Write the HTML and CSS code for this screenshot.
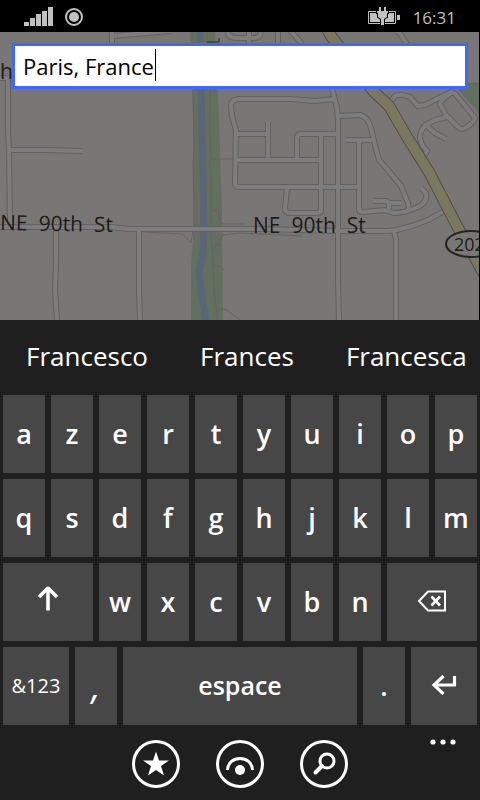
FILE: index.html
```
<!DOCTYPE html>
<html lang="fr">
<head>
<meta charset="utf-8">
<meta name="viewport" content="width=device-width, initial-scale=1">
<title>Cartes</title>
<link rel="stylesheet" href="styles.css">
</head>
<body>
<header class="status">
  <svg class="signal" width="30" height="20" viewBox="0 0 30 20" aria-hidden="true"><path d="M0 15h5v4H0zM6 11h5v8H6zM12 7h5v12h-5zM18 4h5v15h-5zM24 0h5v19h-5z"/></svg>
  <svg class="record" width="18" height="20" viewBox="0 0 18 20" aria-hidden="true"><circle cx="9" cy="10" r="8" fill="none" stroke="#c1c1c1" stroke-width="2"/><circle cx="9" cy="10" r="5"/></svg>
  <svg class="battery" width="32" height="18" viewBox="0 0 32 18" aria-hidden="true">
    <path d="M.5 4.500H27.500V16.500H.5Z" fill="none" stroke="#c1c1c1"/>
    <path d="M2 6H26V15H2ZM29 8h3v5h-3z"/>
    <path class="plug" d="M11 0h2v4h3V0h2v4h2v2h-1v4l-3 2v6h-3v-6l-3-2V6H9V4h2z"/>
  </svg>
  <time class="clock">16:31</time>
</header>

<main class="map">
  <svg class="map-art" viewBox="0 32 480 288" preserveAspectRatio="xMidYMid slice" role="img" aria-label="Plan">
    <defs>
      <g id="roads">
        <path d="M0 78H7M8 78V130L9 150L10 224M10 150L45 150L82 151"/>
        <path d="M112 32V60M112 36L171 31"/>
        <path d="M56 228L56 262L55 290L57 320M139 230V290L140 320"/>
        <path d="M227 30Q228 38 236 38H254Q261 38 261 30M249 30V43M278 30V43M290 30L302 44"/>
        <path d="M396 31Q401 33 402 37L408 45"/>
        <path d="M334 99L315 101L290 99H238Q231 100 231 106L232 116L236 130L235 183Q235 187 239 187H357"/>
        <path d="M326 70L333 92L337 108L338 120V280L339 320M236 134H267M268 122V159M236 160H321M297 160V138Q297 134 301 134H338M321 134V210Q321 213 317 213H290Q285 213 285 208L287 189"/>
        <path d="M346 140L374 140M359 141V209Q359 212 363 212L385 210L394 213Q405 213 418 207Q428 202 426 193L421 188"/>
        <path d="M339 116L360 115Q368 117 371 128L375 145L379 160L388 170L401 186L408 203L409 210M374 201H386L389 203V209M389 203H401"/>
        <path d="M391 101L395 96Q402 93 410 97L418 106L425 105L453 91M451 93Q454 92 457 96L475 118Q475 122 465 128Q461 130 458 127L446 115L440 104Q440 101 451 93M447 117L435 120L427 124Q420 129 420 138L422 145L427 151L425 155M427 126L435 133L446 139"/>
        <path d="M394 231L396 240V320"/>
      </g>
      <path id="avenue" d="M-2 227L110 227L130 229L230 229L260 229L340 231H388L397 230L415 225L430 219L446 210"/>
      <path id="highway" d="M322 20L331 36L373 91L389 106L407 137L429 172L457 226L484 274"/>
    </defs>
    <rect y="32" width="480" height="288" fill="#797775"/>
    <path d="M190 32H215L219 120L222 210L223 320H191V262L193 240V120Z" fill="#64705f"/>
    <path d="M457 87L465 83L480 82V114L460 92Z" fill="#64705f"/>
    <path d="M200 30L201 90L203 180L204 230L203 252L199 272L201 290L206 322" fill="none" stroke="#5a6577" stroke-width="7"/>
    <g fill="none" stroke="#686060">
      <path d="M193 90L194 140L193 168L194 195V240M210 90L211 200V235L213 260L214 290L217 314V322M211 159H235M212 211L218 210L221 224L245 224M143 232L183 234L191 243L193 231M213 233L219 240L213 250M214 243L220 247L222 235L240 233L302 236M213 266Q220 264 224 271M217 311Q221 307 227 310L240 320M463 84H480"/>
    </g>
    <use href="#roads" class="case"/><use href="#avenue" class="case"/>
    <use href="#roads" class="lane"/><use href="#avenue" class="lane"/>
    <use href="#highway" class="highway-case"/><use href="#highway" class="highway-lane"/>
    <path d="M207 42H219V38" fill="none" stroke="#242424" stroke-width="1"/>
    <g class="labels">
      <text x="0" y="79">h</text>
      <text x="0" y="230" transform="rotate(1 0 230)">NE&nbsp; 90th&nbsp; St</text>
      <text x="253" y="233">NE&nbsp; 90th&nbsp; St</text>
    </g>
    <ellipse cx="471" cy="244" rx="25" ry="13" fill="#797775" stroke="#242424" stroke-width="2"/>
    <text class="shield" x="454" y="251">202</text>
    <path d="M479.500 32V320" stroke="#000"/>
  </svg>
  <form class="search">
    <label class="hidden" for="place">Rechercher</label>
    <input id="place" class="place" type="text" value="Paris, France" autocomplete="off" spellcheck="false">
    <span class="caret" aria-hidden="true"></span>
  </form>
</main>

<section class="keyboard" aria-label="Clavier">
  <div class="suggestions">
    <button type="button">Francesco</button><button type="button">Frances</button><button type="button">Francesca</button>
  </div>
  <div class="keys">
    <button type="button">a</button><button type="button">z</button><button type="button">e</button><button type="button">r</button><button type="button">t</button><button type="button">y</button><button type="button">u</button><button type="button">i</button><button type="button">o</button><button type="button">p</button>
    <button type="button">q</button><button type="button">s</button><button type="button">d</button><button type="button">f</button><button type="button">g</button><button type="button">h</button><button type="button">j</button><button type="button">k</button><button type="button">l</button><button type="button">m</button>
    <button type="button" class="wide" aria-label="Majuscule"><svg class="shift" width="20" height="26" viewBox="0 0 20 26"><path d="M10 25.500V3" fill="none" stroke="#fff" stroke-width="3.600"/><path d="M1 12L10 3L19 12" fill="none" stroke="#fff" stroke-width="3.600" stroke-linejoin="bevel"/></svg></button>
    <button type="button">w</button><button type="button">x</button><button type="button">c</button><button type="button">v</button><button type="button">b</button><button type="button">n</button>
    <button type="button" class="wide" aria-label="Effacer"><svg width="30" height="22" viewBox="0 0 30 22"><path d="M11 1.500H28V20.500H11L2 11Z" fill="none" stroke="#fff" stroke-width="2"/><path d="M14.500 6.500L23 15.500M23 6.500L14.500 15.500" fill="none" stroke="#fff" stroke-width="2.600"/></svg></button>
    <button type="button" class="side small">&amp;123</button>
    <button type="button" class="comma">,</button>
    <button type="button" class="space">espace</button>
    <button type="button">.</button>
    <button type="button" class="side" aria-label="Entrée"><svg width="26" height="20" viewBox="0 0 26 20"><path d="M23.500 1V10H2.500" fill="none" stroke="#fff" stroke-width="3.200"/><path d="M12.500 1L3 10L12.500 19" fill="none" stroke="#fff" stroke-width="3.200"/></svg></button>
  </div>
</section>

<nav class="appbar" aria-label="Actions">
  <button type="button" aria-label="Favoris"><svg width="48" height="48" viewBox="0 0 48 48"><circle cx="24" cy="24" r="22.500"/><path class="solid" d="M24 11.500L27 20.500H37L29 26L32 35.500L24 30L16 35.500L19 26L11 20.500H21Z"/></svg></button>
  <button type="button" aria-label="Autour de moi"><svg width="48" height="48" viewBox="0 0 48 48"><circle cx="24" cy="24" r="22.500"/><path d="M11.500 30C12 22.500 17.500 18.500 24 18.500S36 22.500 36.500 30"/><circle class="solid" cx="24" cy="30" r="5"/></svg></button>
  <button type="button" aria-label="Rechercher"><svg width="48" height="48" viewBox="0 0 48 48"><circle cx="24" cy="24" r="22.500"/><circle cx="27" cy="21" r="7"/><path d="M22 26L15.500 32.500" stroke-width="4" stroke-linecap="round"/></svg></button>
  <button type="button" class="more" aria-label="Plus"><svg width="26" height="6" viewBox="0 0 26 6"><g class="solid"><circle cx="3" cy="3" r="2.600"/><circle cx="13" cy="3" r="2.600"/><circle cx="23" cy="3" r="2.600"/></g></svg></button>
</nav>
</body>
</html>
```
FILE: styles.css
```
* { box-sizing: border-box; }

body {
  margin: 0;
  min-height: 100vh;
  display: flex;
  flex-direction: column;
  background: #1f1f1f;
  color: #fff;
  font-family: "Open Sans", "Noto Sans", sans-serif;
}

button {
  border: 0;
  padding: 0;
  background: none;
  color: inherit;
  font: inherit;
}

svg { display: block; }

.status {
  display: flex;
  align-items: center;
  height: 32px;
  padding: 2px 24px 0;
  background: #000;
  color: #c1c1c1;
  fill: #c1c1c1;
}
.record { margin-left: 11px; }
.battery { margin-left: auto; margin-bottom: 2px; }
.plug { stroke: #000; stroke-width: 2; paint-order: stroke; }
.clock { margin-left: 13px; font-size: 17px; }

.map {
  position: relative;
  flex: 1;
  min-height: 240px;
  overflow: hidden;
  background: #797775;
}
.map-art { position: absolute; inset: 0; width: 100%; height: 100%; }
.case { fill: none; stroke: #626060; stroke-width: 6; }
.lane { fill: none; stroke: #7d7d7d; stroke-width: 4; }
.highway-case { fill: none; stroke: #554d48; stroke-width: 12; }
.highway-lane { fill: none; stroke: #7c775f; stroke-width: 10; }
.labels, .shield { fill: #1c1c1c; font-size: 21px; }
.shield { font-size: 18px; }

.search { position: relative; margin: 11px 12px; }
.place {
  display: block;
  width: 100%;
  height: 46px;
  padding: 0 8px;
  border: 3px solid #3f68ff;
  border-radius: 0;
  outline: 0;
  background: #fff;
  color: #000;
  font: 22px "Open Sans", "Noto Sans", sans-serif;
}
.caret {
  position: absolute;
  left: 143px;
  top: 6px;
  width: 1px;
  height: 32px;
  background: #000;
}
.hidden {
  position: absolute;
  width: 1px;
  height: 1px;
  overflow: hidden;
  clip-path: inset(50%);
}

.suggestions {
  display: flex;
  gap: 52px;
  height: 72px;
  padding-left: 26px;
  overflow: hidden;
  font-size: 26px;
}

.keys {
  display: grid;
  grid-template-columns: repeat(20, 1fr);
  grid-auto-rows: 84px;
}
.keys button {
  display: flex;
  align-items: center;
  justify-content: center;
  grid-column: span 2;
  margin: 3px;
  padding-bottom: 2px;
  background: #474747;
  font-size: 27px;
  font-weight: 600;
}
.keys .wide { grid-column: span 4; }
.keys .side { grid-column: span 3; }
.keys .space { grid-column: span 10; font-size: 25px; }
.keys .small { font-size: 20px; font-weight: 500; }
.keys .comma { font-size: 36px; font-weight: 400; font-style: italic; }
.shift { margin-bottom: 6px; }

.appbar {
  position: relative;
  display: flex;
  justify-content: center;
  gap: 36px;
  height: 72px;
  padding-top: 12px;
}
.appbar svg { fill: none; stroke: #fff; stroke-width: 3; }
.appbar button { height: 48px; }
.appbar .solid { fill: #fff; stroke: none; }
.appbar .more { position: absolute; right: 24px; top: 11px; height: 6px; }
```
